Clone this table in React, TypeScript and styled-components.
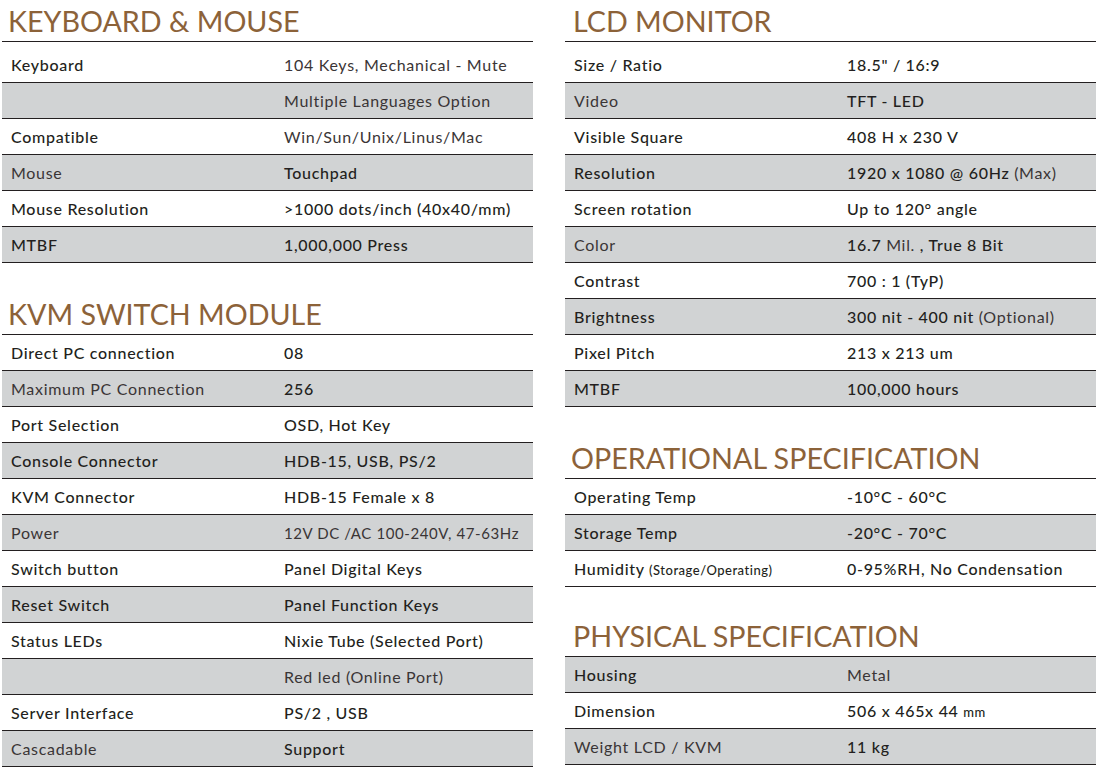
import React, { ReactNode } from 'react';
import styled, { createGlobalStyle } from 'styled-components';

const GlobalStyle = createGlobalStyle`
  html, body {
    margin: 0;
    padding: 0;
    background: #ffffff;
  }
  body {
    font-family: 'Lato', 'Liberation Sans', sans-serif;
    color: #231f20;
  }
`;

const ink = '#231f20';
const shade = '#d1d3d4';
const brown = '#8c6239';

const Page = styled.div`
  display: grid;
  grid-template-columns: 531px 531px;
  column-gap: 32px;
  padding-left: 2px;
  width: 1096px;
  box-sizing: border-box;
`;

const Column = styled.div`
  display: flex;
  flex-direction: column;
`;

const Section = styled.section<{ $gap?: number }>`
  margin-top: ${(p) => p.$gap ?? 0}px;
`;

const Heading = styled.h2<{ $indent?: number }>`
  margin: 0;
  height: 42px;
  box-sizing: border-box;
  padding: 3px 0 0 ${(p) => p.$indent ?? 6}px;
  font-family: 'Lato', 'Liberation Sans', sans-serif;
  font-weight: 400;
  font-size: 28.7px;
  line-height: 36px;
  letter-spacing: 0;
  color: ${brown};
  white-space: nowrap;
  border-bottom: 1.5px solid ${ink};
`;

const Row = styled.div<{ $shaded: boolean; $tall?: boolean }>`
  display: grid;
  grid-template-columns: 273px 1fr;
  align-items: center;
  height: 35px;
  box-sizing: content-box;
  padding: ${(p) => (p.$tall ? '5px 0 0 9px' : '0 0 0 9px')};
  background: ${(p) => (p.$shaded ? shade : 'transparent')};
  border-bottom: 1.5px solid ${ink};
  font-size: 16px;
  white-space: nowrap;
`;

const Cell = styled.div<{ $light?: boolean }>`
  font-weight: ${(p) => (p.$light ? 400 : 500)};
  color: ${(p) => (p.$light ? '#3a3536' : ink)};
  letter-spacing: 0.7px;
`;

const Soft = styled.span`
  font-weight: 400;
  color: #3a3536;
`;

const Tiny = styled.span`
  font-size: 13px;
  letter-spacing: 0.5px;
`;

const Compact = styled.span`
  font-size: 15px;
  letter-spacing: 0.6px;
`;

type Spec = {
  label: ReactNode;
  value: ReactNode;
  lightLabel?: boolean;
  lightValue?: boolean;
};

type Block = {
  title: string;
  gap?: number;
  indent?: number;
  startShaded?: boolean;
  firstTall?: boolean;
  rows: Spec[];
};

const left: Block[] = [
  {
    title: 'KEYBOARD & MOUSE',
    firstTall: true,
    rows: [
      { label: 'Keyboard', value: '104 Keys, Mechanical - Mute', lightValue: true },
      { label: '', value: 'Multiple Languages Option', lightValue: true },
      { label: 'Compatible', value: 'Win/Sun/Unix/Linus/Mac', lightValue: true },
      { label: 'Mouse', value: 'Touchpad', lightLabel: true },
      { label: 'Mouse Resolution', value: '>1000 dots/inch (40x40/mm)' },
      { label: 'MTBF', value: '1,000,000 Press' },
    ],
  },
  {
    title: 'KVM SWITCH MODULE',
    gap: 30,
    rows: [
      { label: 'Direct PC connection', value: '08' },
      { label: 'Maximum PC Connection', value: '256', lightLabel: true },
      { label: 'Port Selection', value: 'OSD, Hot Key' },
      { label: 'Console Connector', value: 'HDB-15, USB, PS/2' },
      { label: 'KVM Connector', value: 'HDB-15 Female x 8' },
      { label: 'Power', value: <Compact>12V DC /AC 100-240V, 47-63Hz</Compact>, lightLabel: true, lightValue: true },
      { label: 'Switch button', value: 'Panel Digital Keys' },
      { label: 'Reset Switch', value: 'Panel Function Keys' },
      { label: 'Status LEDs', value: 'Nixie Tube (Selected Port)' },
      { label: '', value: 'Red led (Online Port)', lightValue: true },
      { label: 'Server Interface', value: 'PS/2 , USB' },
      { label: 'Cascadable', value: 'Support', lightLabel: true },
    ],
  },
];

const right: Block[] = [
  {
    title: 'LCD MONITOR',
    indent: 8,
    firstTall: true,
    rows: [
      { label: 'Size / Ratio', value: '18.5" / 16:9' },
      { label: 'Video', value: 'TFT - LED', lightLabel: true },
      { label: 'Visible Square', value: '408 H x 230 V' },
      { label: 'Resolution', value: <>1920 x 1080 @ 60Hz <Soft>(Max)</Soft></> },
      { label: 'Screen rotation', value: 'Up to 120° angle' },
      { label: 'Color', value: <>16.7 <Soft>Mil.</Soft> , True 8 Bit</>, lightLabel: true },
      { label: 'Contrast', value: '700 : 1 (TyP)' },
      { label: 'Brightness', value: <>300 nit - 400 nit <Soft>(Optional)</Soft></> },
      { label: 'Pixel Pitch', value: '213 x 213 um' },
      { label: 'MTBF', value: '100,000 hours' },
    ],
  },
  {
    title: 'OPERATIONAL SPECIFICATION',
    gap: 30,
    indent: 6,
    rows: [
      { label: 'Operating Temp', value: '-10°C - 60°C' },
      { label: 'Storage Temp', value: '-20°C - 70°C' },
      { label: <>Humidity <Tiny>(Storage/Operating)</Tiny></>, value: '0-95%RH, No Condensation' },
    ],
  },
  {
    title: 'PHYSICAL SPECIFICATION',
    gap: 28,
    indent: 8,
    startShaded: true,
    rows: [
      { label: 'Housing', value: 'Metal', lightValue: true },
      { label: 'Dimension', value: <>506 x 465x 44 <Tiny>mm</Tiny></> },
      { label: 'Weight LCD / KVM', value: '11 kg', lightLabel: true },
    ],
  },
];

const SpecSection: React.FC<{ block: Block }> = ({ block }) => (
  <Section $gap={block.gap}>
    <Heading $indent={block.indent}>{block.title}</Heading>
    {block.rows.map((r, i) => (
      <Row
        key={i}
        $shaded={(i % 2 === 1) !== !!block.startShaded}
        $tall={block.firstTall && i === 0}
      >
        <Cell $light={r.lightLabel}>{r.label}</Cell>
        <Cell $light={r.lightValue}>{r.value}</Cell>
      </Row>
    ))}
  </Section>
);

export default function App() {
  return (
    <>
      <GlobalStyle />
      <Page>
        <Column>
          {left.map((b) => (
            <SpecSection key={b.title} block={b} />
          ))}
        </Column>
        <Column>
          {right.map((b) => (
            <SpecSection key={b.title} block={b} />
          ))}
        </Column>
      </Page>
    </>
  );
}
